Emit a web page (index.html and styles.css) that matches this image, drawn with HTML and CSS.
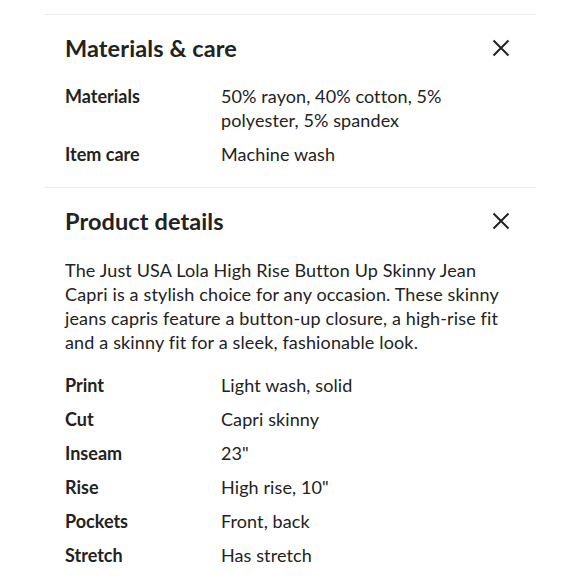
FILE: index.html
```html
<!DOCTYPE html>
<html>
<head>
<meta charset="utf-8">
<link rel="stylesheet" href="styles.css">
</head>
<body>
<div class="page">
  <section class="panel">
    <div class="panel-head">
      <h2 class="panel-title">Materials &amp; care</h2>
      <svg class="close" viewBox="0 0 18 18" width="18" height="18"><path d="M1.5 1.5 L16.5 16.5 M16.5 1.5 L1.5 16.5" stroke="#222" stroke-width="2" fill="none"/></svg>
    </div>
    <div class="specs">
      <div class="row"><div class="label">Materials</div><div class="value">50% rayon, 40% cotton, 5% polyester, 5% spandex</div></div>
      <div class="row"><div class="label">Item care</div><div class="value">Machine wash</div></div>
    </div>
  </section>
  <section class="panel">
    <div class="panel-head">
      <h2 class="panel-title">Product details</h2>
      <svg class="close" viewBox="0 0 18 18" width="18" height="18"><path d="M1.5 1.5 L16.5 16.5 M16.5 1.5 L1.5 16.5" stroke="#222" stroke-width="2" fill="none"/></svg>
    </div>
    <p class="desc">The Just USA Lola High Rise Button Up Skinny Jean Capri is a stylish choice for any occasion. These skinny jeans capris feature a button-up closure, a high-rise fit and a skinny fit for a sleek, fashionable look.</p>
    <div class="specs">
      <div class="row"><div class="label">Print</div><div class="value">Light wash, solid</div></div>
      <div class="row"><div class="label">Cut</div><div class="value">Capri skinny</div></div>
      <div class="row"><div class="label">Inseam</div><div class="value">23"</div></div>
      <div class="row"><div class="label">Rise</div><div class="value">High rise, 10"</div></div>
      <div class="row"><div class="label">Pockets</div><div class="value">Front, back</div></div>
      <div class="row"><div class="label">Stretch</div><div class="value">Has stretch</div></div>
    </div>
  </section>
</div>
</body>
</html>
```
FILE: styles.css
```css
html, body {
  margin: 0;
  padding: 0;
  background: #fff;
}
body {
  font-family: Lato, "Noto Sans", sans-serif;
  color: #222;
  width: 580px;
  height: 580px;
  overflow: hidden;
}
.page {
  padding-top: 14px;
  margin: 0 44px;
}
.panel {
  border-top: 1px solid #ececec;
  padding: 18px 26px 21px 21px;
}
.panel-head {
  display: flex;
  align-items: center;
  justify-content: space-between;
  height: 30px;
}
.panel-title {
  margin: 0;
  font-size: 23.5px;
  font-weight: 700;
  line-height: 30px;
  letter-spacing: 0.1px;
}
.close {
  display: block;
}
.desc {
  margin: 22px 0 0;
  font-size: 18px;
  line-height: 24px;
  letter-spacing: 0.15px;
}
.specs {
  margin-top: 21px;
  display: flex;
  flex-direction: column;
  gap: 10px;
}
.desc + .specs {
  margin-top: 19px;
}
.row {
  display: flex;
  font-size: 18px;
  line-height: 24px;
}
.label {
  width: 156px;
  flex: none;
  font-weight: 700;
}
.value {
  flex: 1;
  padding-right: 50px;
  letter-spacing: 0.1px;
}
```
